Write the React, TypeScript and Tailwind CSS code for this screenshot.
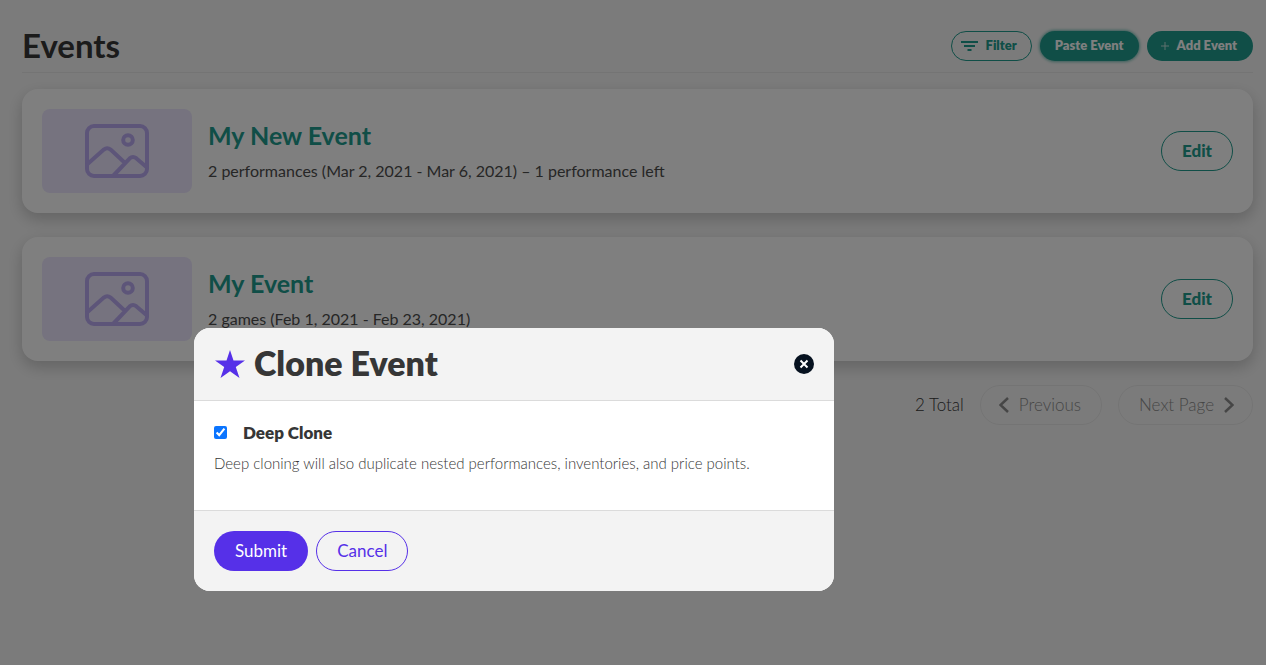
import React from 'react';

const events = [
  { title: 'My New Event', details: '2 performances (Mar 2, 2021 - Mar 6, 2021) – 1 performance left' },
  { title: 'My Event', details: '2 games (Feb 1, 2021 - Feb 23, 2021)' },
];

const ImagePlaceholder: React.FC = () => (
  <div className="flex h-[84px] w-[150px] shrink-0 items-center justify-center rounded-lg bg-[#ece6ff]">
    <svg width="64" height="54" viewBox="0 0 64 54" fill="none" stroke="#baaaf2" strokeWidth="4" aria-hidden="true">
      <rect x="2" y="2" width="60" height="50" rx="7" />
      <circle cx="43" cy="16" r="4.8" />
      <path d="M2 40.5 18.8 25.6Q22.2 22.8 25.6 25.6L39.5 38.5M28.5 51.5 44.5 34.6Q47.8 31.6 51.2 34.2L62 43.5" />
    </svg>
  </div>
);

const EventCard: React.FC<{ title: string; details: string }> = ({ title, details }) => (
  <li className="flex items-center gap-4 rounded-2xl bg-white p-5 shadow-[0_6px_16px_rgba(0,0,0,0.2)]">
    <ImagePlaceholder />
    <div className="min-w-0 flex-1">
      <h2 className="text-[25px] leading-8 font-bold text-[#209c8e]">
        <a href="#">{title}</a>
      </h2>
      <p className="mt-2 text-base leading-6 text-[#4d4d4d]">{details}</p>
    </div>
    <button type="button" className="h-10 rounded-full border border-[#209c8e] px-5 text-[17px] font-black text-[#209c8e]">
      Edit
    </button>
  </li>
);

const CloneDialog: React.FC = () => (
  <div className="fixed inset-0 flex items-start bg-black/50 pt-[328px] pl-[194px]">
    <div role="dialog" aria-modal="true" aria-labelledby="clone-title" className="w-full max-w-[640px] overflow-hidden rounded-2xl bg-white">
      <header className="flex items-center border-b border-[#dbdbdb] bg-[#f3f3f3] px-5 py-4">
        <svg width="32" height="32" viewBox="0 0 32 32" fill="#5630e8" aria-hidden="true">
          <path d="M16 2 19.5 12.4H31L21.8 19 25.5 30 16 23.2 6.5 30 10.2 19 1 12.4H12.5Z" />
        </svg>
        <h1 id="clone-title" className="ml-2 flex-1 pb-[2px] text-[34px] leading-[38px] font-extrabold text-[#363636]">Clone Event</h1>
        <button type="button" aria-label="Close">
          <svg width="20" height="20" viewBox="0 0 20 20" aria-hidden="true">
            <circle cx="10" cy="10" r="10" fill="#06111f" />
            <path d="m6.5 6.5 7 7m0-7-7 7" stroke="white" strokeWidth="2" />
          </svg>
        </button>
      </header>
      <div className="px-5 pt-5 pb-9">
        <label className="flex items-baseline gap-4 text-[17px] leading-6 font-extrabold text-[#363636]">
          <input type="checkbox" defaultChecked className="size-[13px] accent-[#0b75ff]" />
          Deep Clone
        </label>
        <p className="mt-2 text-[15px] leading-[21px] font-light text-[#363636]">
          Deep cloning will also duplicate nested performances, inventories, and price points.
        </p>
      </div>
      <footer className="flex gap-2 border-t border-[#dbdbdb] bg-[#f3f3f3] p-5">
        <button type="button" className="h-10 rounded-full bg-[#5630e8] px-[21px] text-[17px] text-white">Submit</button>
        <button type="button" className="h-10 rounded-full border border-[#5630e8] px-5 text-[17px] text-[#5630e8]">Cancel</button>
      </footer>
    </div>
  </div>
);

export default function App() {
  return (
    <div className="min-h-screen bg-[#f7f7f7] font-['Lato',sans-serif]">
      <main className="pt-5 pr-[13px] pl-[22px]">
        <header className="flex items-center justify-between border-b border-[#e9e9e9] pb-[1px]">
          <h1 className="text-[33px] leading-[51px] font-bold text-[#363636]">Events</h1>
          <div className="flex gap-2 text-[13px] font-extrabold">
            <button type="button" className="flex h-[30px] items-center gap-2 rounded-full border border-[#209c8e] pr-[14px] pl-[9px] text-[#209c8e]">
              <svg width="17" height="10" viewBox="0 0 17 10" stroke="currentColor" strokeWidth="1.8" aria-hidden="true">
                <path d="M0 1h17M3 5h11M6.5 9h4" />
              </svg>
              Filter
            </button>
            <button type="button" className="h-[30px] rounded-full bg-[#209c8e] px-[15px] text-white shadow-[0_0_3px_1px_rgba(32,156,142,0.6)]">
              Paste Event
            </button>
            <button type="button" className="flex h-[30px] items-center gap-2 rounded-full bg-[#209c8e] pr-4 pl-[14px] text-white">
              <svg width="8" height="8" viewBox="0 0 8 8" stroke="currentColor" opacity="0.7" aria-hidden="true">
                <path d="M4 0v8M0 4h8" />
              </svg>
              Add Event
            </button>
          </div>
        </header>
        <ul className="mt-4 flex flex-col gap-6">
          {events.map((event) => (
            <EventCard key={event.title} {...event} />
          ))}
        </ul>
        <nav aria-label="Pagination" className="mt-6 flex items-center justify-end gap-4 text-[17px] font-light text-[#363636]">
          <span>2 Total</span>
          <button type="button" disabled className="flex h-10 items-center gap-[10px] rounded-full border border-[#e9e9e9] pr-5 pl-[18px] text-[#8d8d8d]">
            <svg width="10" height="16" viewBox="0 0 10 16" fill="none" stroke="currentColor" strokeWidth="2.5" aria-hidden="true">
              <path d="M9 1 1.5 8 9 15" />
            </svg>
            Previous
          </button>
          <button type="button" disabled className="flex h-10 items-center gap-[10px] rounded-full border border-[#e9e9e9] pr-[18px] pl-5 text-[#8d8d8d]">
            Next Page
            <svg width="10" height="16" viewBox="0 0 10 16" fill="none" stroke="currentColor" strokeWidth="2.5" aria-hidden="true">
              <path d="m1 1 7.5 7L1 15" />
            </svg>
          </button>
        </nav>
      </main>
      <CloneDialog />
    </div>
  );
}
